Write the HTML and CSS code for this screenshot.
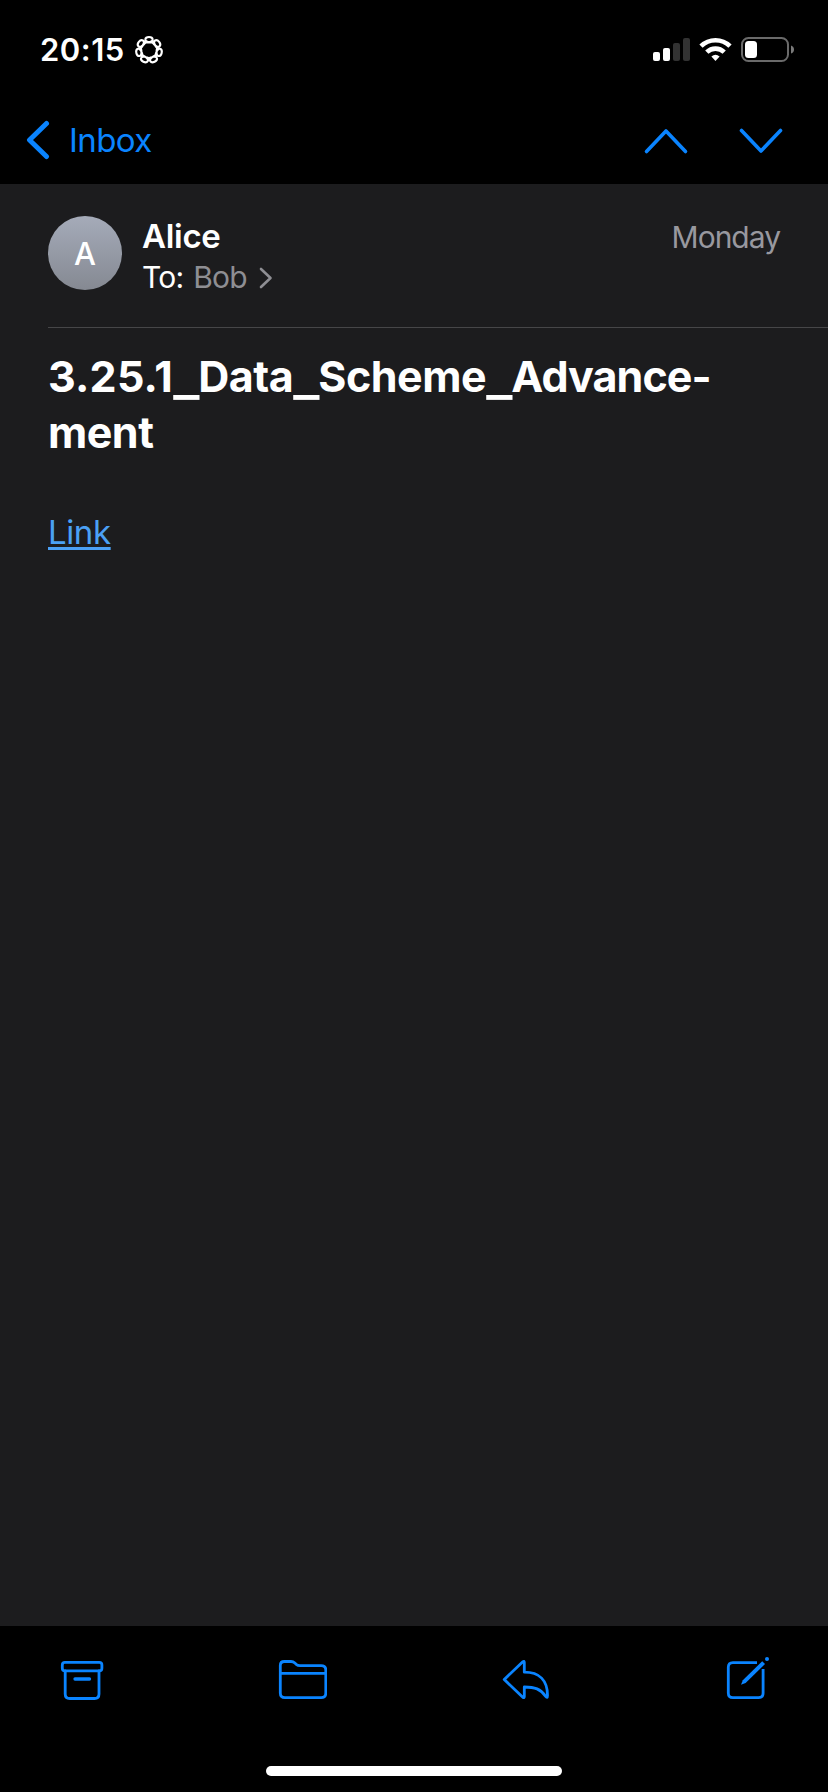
FILE: index.html
```
<!DOCTYPE html>
<html lang="en">
<head>
<meta charset="utf-8">
<title>Mail</title>
<link rel="stylesheet" href="styles.css">
</head>
<body>
<div class="screen">
  <header class="status">
    <span class="time">20:15</span>
    <svg class="focus" width="32" height="32" viewBox="-16 -16 32 32">
      <defs><path id="loop" d="M-5 -7.6C-1 -7.2 4.2 -8 3.7 -10.6C3.2 -13.8 -3.2 -13.8 -3.7 -10.6C-4.2 -8 1 -7.2 5 -7.6"/></defs>
      <use href="#loop"/>
      <use href="#loop" transform="rotate(51.43)"/>
      <use href="#loop" transform="rotate(102.86)"/>
      <use href="#loop" transform="rotate(154.29)"/>
      <use href="#loop" transform="rotate(205.71)"/>
      <use href="#loop" transform="rotate(257.14)"/>
      <use href="#loop" transform="rotate(308.57)"/>
    </svg>
    <svg class="indicators" width="144" height="28" viewBox="652 36 144 28">
      <g fill="#fff">
        <rect x="653" y="52" width="7" height="9" rx="2"/>
        <rect x="663" y="48" width="7" height="13" rx="2"/>
      </g>
      <g fill="#323232">
        <rect x="673" y="43" width="7" height="18" rx="2"/>
        <rect x="683" y="38" width="7" height="23" rx="2"/>
      </g>
      <g fill="none" stroke="#fff" stroke-width="4.6">
        <path d="M701 46.2A20.6 20.6 0 0 1 730 46.2"/>
        <path d="M706.8 52.2A12.4 12.4 0 0 1 724.2 52.2"/>
      </g>
      <path fill="#fff" d="M711.4 56.6Q715.5 53 719.6 56.6L715.5 61Z"/>
      <rect x="742" y="38" width="46" height="23" rx="6.5" fill="none" stroke="#6a6a6a" stroke-width="2"/>
      <rect x="745" y="41" width="12" height="17" rx="3.5" fill="#fff"/>
      <path fill="#7a7a7a" d="M791 45.5Q794 46.5 794 49.5T791 53.5Z"/>
    </svg>
  </header>

  <nav class="nav">
    <a class="back">
      <svg width="24" height="40" viewBox="0 0 24 40"><path d="M20.5 3.5L3.5 20L20.5 36.5"/></svg>
      <span>Inbox</span>
    </a>
    <div class="arrows">
      <svg width="46" height="28" viewBox="0 0 46 28"><path d="M3.5 24.5L23 4L42.5 24.5"/></svg>
      <svg width="46" height="28" viewBox="0 0 46 28"><path d="M3.5 3.5L23 24L42.5 3.5"/></svg>
    </div>
  </nav>

  <main class="message">
    <section class="envelope">
      <div class="avatar">A</div>
      <div class="people">
        <div class="from">Alice</div>
        <div class="to">
          <span>To:</span><span class="recipient">Bob</span>
          <svg width="14" height="22" viewBox="0 0 14 22"><path d="M2 2L11.5 11L2 20"/></svg>
        </div>
      </div>
      <div class="date">Monday</div>
    </section>
    <h1 class="subject"><span class="digits">3.25.1</span><span class="bar">_</span>Data<span class="bar">_</span>Scheme<span class="bar">_</span><span class="tail">Advance-</span><br>ment</h1>
    <a class="link">Link</a>
  </main>

  <footer class="toolbar">
    <div class="actions">
      <svg width="44" height="42" viewBox="60 1658 44 42">
        <rect x="62.3" y="1662.3" width="39.6" height="8.6" rx="2.6"/>
        <path d="M65.2 1671V1694Q65.2 1698.5 69.7 1698.5H94.5Q99 1698.5 99 1694V1671"/>
        <path d="M75 1679H89.5" stroke-width="3.3"/>
      </svg>
      <svg width="50" height="42" viewBox="277 1658 50 42">
        <path d="M280.3 1693V1665.5Q280.3 1661.5 284.3 1661.5H291Q293.2 1661.5 294.8 1663L296.2 1664.3Q297.8 1665.6 300 1665.6H321.2Q325.8 1665.6 325.8 1670V1693Q325.8 1697.6 321.2 1697.6H285Q280.3 1697.6 280.3 1693ZM280.3 1673.3H325.8"/>
      </svg>
      <svg width="50" height="42" viewBox="500 1658 50 42">
        <path d="M503.2 1679.5L521.8 1661.8Q523.3 1660.5 523.3 1662.5V1672.2C538.5 1672.2 546.5 1680.5 546.5 1695.5Q546.5 1699 544.5 1696.2C539.5 1689 534 1687 523.3 1687V1696.5Q523.3 1698.5 521.8 1697.2Z"/>
      </svg>
      <svg width="46" height="44" viewBox="723 1656 46 44">
        <path class="butt" d="M756 1662.7H731.9Q727.3 1662.7 727.3 1667.3V1693Q727.3 1697.6 731.9 1697.6H757.5Q762.1 1697.6 762.1 1693V1669"/>
        <path class="solid" d="M740 1684.8L741.8 1680.2L761.2 1661.2L764 1664L744.6 1683Z"/>
        <circle class="solid" cx="766" cy="1659" r="2"/>
      </svg>
    </div>
    <div class="home"></div>
  </footer>
</div>
</body>
</html>
```
FILE: styles.css
```
body {
  margin: 0;
  background: #000;
  color: #fff;
  font-family: Inter, "Liberation Sans", sans-serif;
}

.screen {
  display: flex;
  flex-direction: column;
  width: 828px;
  height: 1792px;
  overflow: hidden;
}

svg {
  display: block;
  flex: none;
}

.status {
  display: flex;
  align-items: center;
  box-sizing: border-box;
  height: 100px;
  padding: 0 32px 1px 40px;
}

.time {
  font-size: 31px;
  font-weight: 600;
  letter-spacing: 0.5px;
}

.focus {
  margin-left: 8px;
  fill: none;
  stroke: #fff;
  stroke-width: 2.1;
}

.indicators {
  margin-left: auto;
}

.nav {
  display: flex;
  align-items: center;
  justify-content: space-between;
  box-sizing: border-box;
  height: 84px;
  padding: 0 44px 4px 26px;
  color: #0a84ff;
}

.nav svg {
  fill: none;
  stroke: #0a84ff;
  stroke-width: 3.6;
  stroke-linecap: round;
  stroke-linejoin: round;
}

.back {
  display: flex;
  align-items: center;
  gap: 19px;
  font-size: 33px;
  letter-spacing: -0.6px;
}

.nav .back svg {
  stroke-width: 5;
}

.arrows {
  display: flex;
  gap: 49px;
  padding-top: 2px;
}

.message {
  flex: 1;
  padding-left: 48px;
  background: #1c1c1e;
}

.envelope {
  display: flex;
  box-sizing: border-box;
  height: 144px;
  padding: 32px 48px 0 0;
  border-bottom: 1px solid #464648;
}

.avatar {
  width: 74px;
  height: 74px;
  border-radius: 50%;
  background: linear-gradient(#a5abb9, #858992);
  font-size: 31px;
  font-weight: 500;
  line-height: 75px;
  text-align: center;
}

.people {
  padding-left: 20px;
}

.from {
  font-size: 33px;
  font-weight: 600;
  line-height: 40px;
  letter-spacing: -0.3px;
}

.to {
  display: flex;
  align-items: center;
  font-size: 30px;
  line-height: 43px;
  letter-spacing: -0.8px;
}

.recipient {
  margin: 0 12px 0 10px;
  color: #8e8e93;
}

.to svg {
  fill: none;
  stroke: #8e8e93;
  stroke-width: 2.6;
  stroke-linecap: round;
  stroke-linejoin: round;
}

.date {
  margin-left: auto;
  color: #98989f;
  font-size: 30px;
  line-height: 43px;
  letter-spacing: -1px;
}

.subject {
  margin: 20px 0 0;
  font-size: 43px;
  font-weight: 700;
  line-height: 56px;
  letter-spacing: -0.5px;
}

.digits {
  letter-spacing: 0.2px;
}

.tail {
  letter-spacing: -0.9px;
}

.bar {
  display: inline-block;
  margin: 0 2.6px;
  line-height: 1;
  transform: translateY(3px) scaleX(1.28);
}

.link {
  display: inline-block;
  margin-top: 52px;
  color: #4ba0f5;
  font-size: 33px;
  line-height: 40px;
  letter-spacing: -0.4px;
  text-decoration: underline;
  text-decoration-thickness: 3px;
  text-decoration-skip-ink: none;
  text-underline-offset: 3px;
}

.toolbar {
  display: flex;
  flex-direction: column;
  align-items: center;
  justify-content: space-between;
  box-sizing: border-box;
  height: 166px;
  padding: 30px 0 16px;
}

.actions {
  display: flex;
  align-items: flex-end;
  justify-content: space-between;
  box-sizing: border-box;
  width: 100%;
  padding: 0 58px 0 60px;
}

.actions svg {
  fill: none;
  stroke: #0a84ff;
  stroke-width: 2.8;
  stroke-linecap: round;
  stroke-linejoin: round;
}

.actions .butt {
  stroke-linecap: butt;
}

.actions .solid {
  fill: #0a84ff;
  stroke: none;
}

.home {
  width: 296px;
  height: 10px;
  border-radius: 5px;
  background: #fff;
}
```
